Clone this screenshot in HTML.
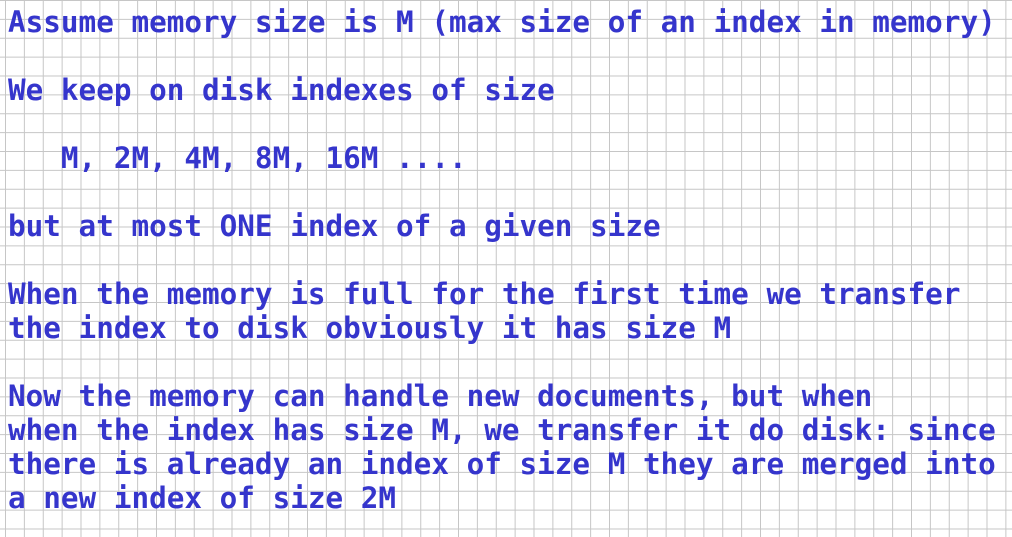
<!DOCTYPE html>
<html><head><meta charset="utf-8"><style>
html,body{margin:0;padding:0;}
body{width:1012px;height:537px;overflow:hidden;background-color:#fff;
background-image:linear-gradient(to right,#c6c6c6 1px,transparent 1px),linear-gradient(to bottom,#c6c6c6 1px,transparent 1px);
background-size:18.88px 18.88px;background-position:5px 0px;}
pre{margin:0;position:absolute;left:8px;top:5px;font-family:"DejaVu Sans Mono","Liberation Mono",monospace;font-weight:bold;font-size:29.3px;line-height:34px;color:#3535cc;}
</style></head><body><pre>Assume memory size is M (max size of an index in memory)

We keep on disk indexes of size

   M, 2M, 4M, 8M, 16M ....

but at most ONE index of a given size

When the memory is full for the first time we transfer
the index to disk obviously it has size M

Now the memory can handle new documents, but when
when the index has size M, we transfer it do disk: since
there is already an index of size M they are merged into
a new index of size 2M</pre></body></html>
